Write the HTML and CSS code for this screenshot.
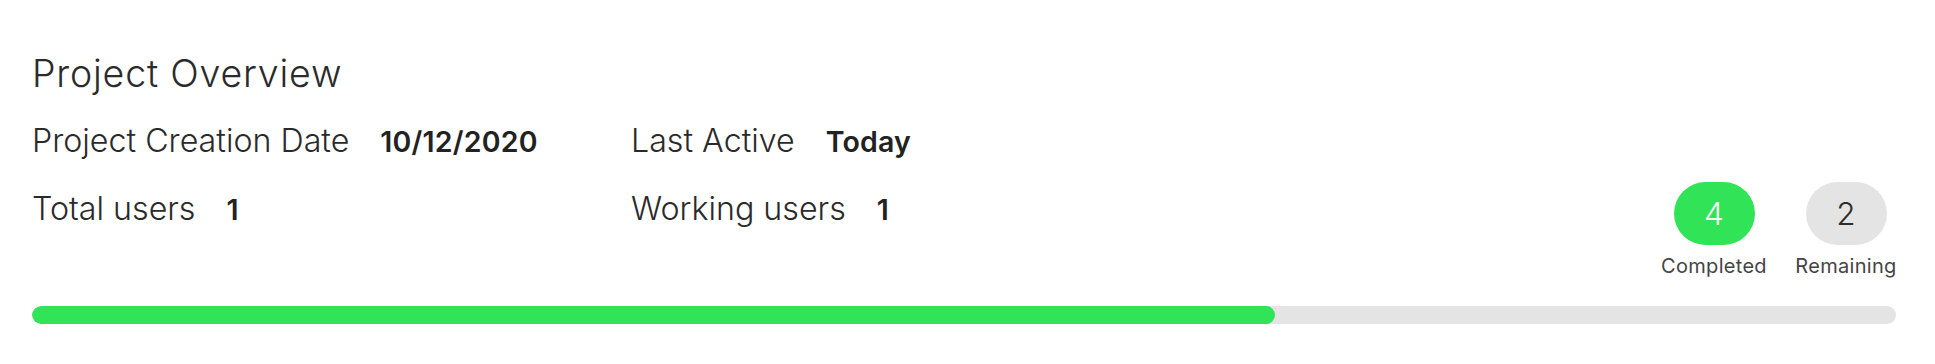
FILE: index.html
```html
<!DOCTYPE html>
<html lang="en">
<head>
<meta charset="utf-8">
<title>Project Overview</title>
<link rel="stylesheet" href="styles.css">
</head>
<body>
<section class="overview">
  <h1 class="title">Project Overview</h1>
  <div class="main">
    <div class="info">
      <div class="item"><span class="label">Project Creation Date</span><span class="value">10/12/2020</span></div>
      <div class="item"><span class="label">Last Active</span><span class="value">Today</span></div>
      <div class="item"><span class="label">Total users</span><span class="value">1</span></div>
      <div class="item"><span class="label">Working users</span><span class="value">1</span></div>
    </div>
    <div class="stats">
      <div class="stat">
        <div class="pill pill-done">4</div>
        <div class="stat-label">Completed</div>
      </div>
      <div class="stat">
        <div class="pill pill-left">2</div>
        <div class="stat-label">Remaining</div>
      </div>
    </div>
  </div>
  <div class="progress"><div class="progress-fill" style="width: 66.67%"></div></div>
</section>
</body>
</html>
```
FILE: styles.css
```css
html, body {
  margin: 0;
  padding: 0;
  background: #ffffff;
}

body {
  font-family: "Inter", "Open Sans", sans-serif;
  color: #2a2a2a;
}

.overview {
  padding: 51px 39px 0 32px;
}

.title {
  margin: 0 0 25px 0;
  font-size: 37.5px;
  line-height: 45px;
  font-weight: 300;
  letter-spacing: 0.8px;
  color: #2b2b2b;
}

.main {
  display: flex;
  justify-content: space-between;
  align-items: flex-start;
}

.info {
  display: grid;
  grid-template-columns: 599px auto;
  row-gap: 27px;
}

.item {
  display: flex;
  align-items: baseline;
  gap: 31px;
  line-height: 40px;
}

.label {
  font-size: 32.2px;
  font-weight: 300;
  color: #2a2a2a;
}

.value {
  font-size: 28.5px;
  font-weight: 600;
  letter-spacing: 0.2px;
  color: #222222;
}

.stats {
  display: flex;
  gap: 32px;
  margin-top: 61px;
}

.stat {
  width: 100px;
  display: flex;
  flex-direction: column;
  align-items: center;
}

.pill {
  width: 81px;
  height: 63px;
  border-radius: 32px;
  font-size: 31.5px;
  font-weight: 300;
  line-height: 63px;
  text-align: center;
}

.pill-done {
  background: #31e357;
  color: #f4fff6;
}

.pill-left {
  background: #e4e4e4;
  color: #2d2d2d;
}

.stat-label {
  margin-top: 9px;
  font-size: 20px;
  line-height: 24px;
  font-weight: 400;
  letter-spacing: 0.3px;
  color: #444444;
  white-space: nowrap;
}

.progress {
  margin-top: 28px;
  height: 18px;
  border-radius: 9px;
  background: #e4e4e4;
  overflow: hidden;
}

.progress-fill {
  height: 100%;
  border-radius: 9px;
  background: #31e357;
}
```
